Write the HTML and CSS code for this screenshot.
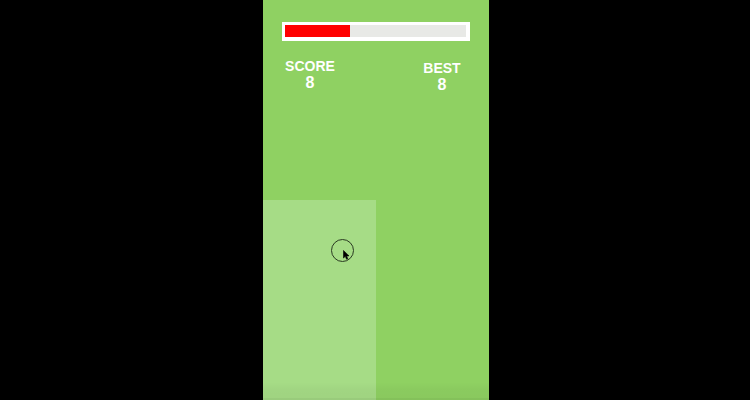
FILE: index.html
```html
<!DOCTYPE html>
<html>
<head>
<meta charset="utf-8">
<link rel="stylesheet" href="styles.css">
</head>
<body>
<div class="stage">
  <div class="game">
    <div class="timer">
      <div class="track"><div class="fill" style="width:36%"></div></div>
    </div>
    <div class="scores">
      <div class="stat">
        <div class="label">SCORE</div>
        <div class="value">8</div>
      </div>
      <div class="stat best">
        <div class="label">BEST</div>
        <div class="value">8</div>
      </div>
    </div>
    <div class="field">
      <div class="lane lit"></div>
      <div class="lane"></div>
    </div>
    <div class="touch">
      <svg class="pointer" width="7" height="10" viewBox="0 0 7 10"><path d="M0.5 0.5 L0.5 8 L2.3 6.3 L3.6 9.3 L4.8 8.8 L3.6 5.9 L6 5.9 Z" fill="#000" stroke="#000" stroke-width="0.6" stroke-linejoin="round"/></svg>
    </div>
  </div>
</div>
</body>
</html>
```

FILE: styles.css
```css
html, body {
  margin: 0;
  padding: 0;
  background: #000;
  height: 100%;
}
.stage {
  display: flex;
  justify-content: center;
  padding-left: 2px;
  height: 400px;
}
.game {
  position: relative;
  width: 226px;
  height: 400px;
  background: #8fd162;
  display: flex;
  flex-direction: column;
  font-family: "Liberation Sans", Arial, sans-serif;
  color: #fff;
  overflow: hidden;
}
.game::after {
  content: "";
  position: absolute;
  left: 0;
  right: 0;
  bottom: 0;
  height: 18px;
  background: linear-gradient(to bottom, rgba(0,0,0,0) 0%, rgba(0,0,0,0.03) 40%, rgba(0,0,0,0.04) 88%, rgba(0,0,0,0.08) 89%, rgba(0,0,0,0.08) 100%);
  pointer-events: none;
}
.timer {
  margin: 22px 0 0 19px;
  width: 188px;
  height: 19px;
  box-sizing: border-box;
  background: #fff;
  padding: 3px 4px 4px 3px;
}
.track {
  height: 100%;
  background: #e8e9e6;
}
.fill {
  height: 100%;
  background: #ff0000;
}
.scores {
  display: flex;
  justify-content: space-between;
  align-items: flex-start;
  padding: 0 17px;
  margin-top: 17px;
  height: 142px;
}
.stat {
  width: 60px;
  text-align: center;
  font-weight: bold;
}
.stat.best {
  margin-top: 2px;
}
.label {
  font-size: 14px;
  line-height: 16px;
}
.value {
  font-size: 16px;
  line-height: 17px;
}
.field {
  flex: 1;
  display: flex;
}
.lane {
  flex: 1;
}
.lane.lit {
  flex: 0 0 113px;
  background: #a6dc86;
}
.touch {
  position: absolute;
  left: 68px;
  top: 239px;
  width: 21px;
  height: 21px;
  border: 1px solid #2a3a22;
  border-radius: 50%;
}
.pointer {
  position: absolute;
  left: 11px;
  top: 10px;
}
```
